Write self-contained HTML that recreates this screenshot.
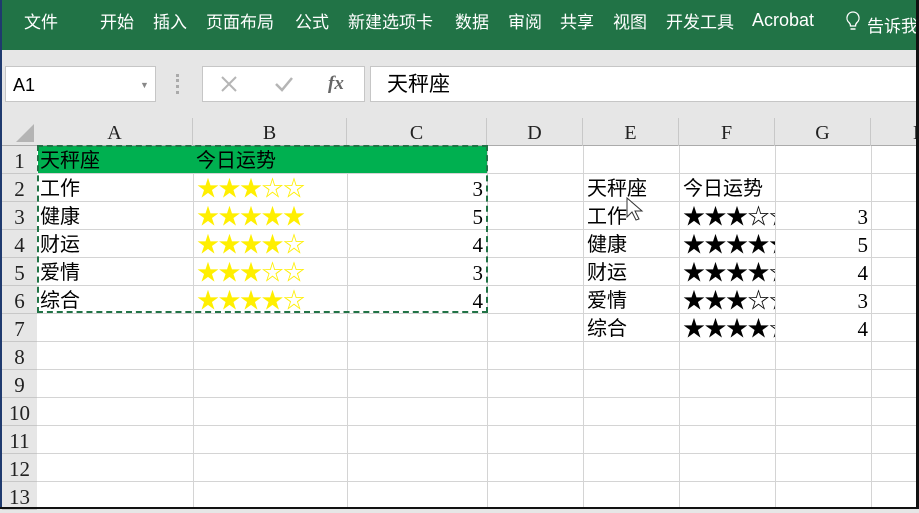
<!DOCTYPE html>
<html><head><meta charset="utf-8"><style>
*{margin:0;padding:0;box-sizing:border-box}
body{width:919px;height:509px;overflow:hidden;background:#e6e6e6;position:relative;font-family:"Liberation Sans","Noto Sans CJK SC",sans-serif}
.a{position:absolute}
.rib{left:0;top:0;width:919px;height:50px;background:#217346;color:#fff;font-size:17px}
.rib span{position:absolute;top:8px;white-space:nowrap}
.cell{position:absolute;height:28px;line-height:30px;font-size:20px;font-family:"Liberation Serif","Noto Sans CJK SC",sans-serif;color:#000;white-space:nowrap;overflow:hidden}
.n{font-size:21px}
.st{font-size:22px;letter-spacing:-0.5px}
.hl{position:absolute;left:37px;width:882px;height:1px;background:#d4d4d4}
.vl{position:absolute;top:146px;height:363px;width:1px;background:#d4d4d4}
.rh{position:absolute;left:2px;width:35px;height:28px;line-height:31px;text-align:center;font-family:"Liberation Serif",serif;font-size:21px;color:#222;background:#e6e6e6;border-bottom:1px solid #c8c8c8}
.ch{position:absolute;top:118px;height:28px;line-height:31px;text-align:center;font-family:"Liberation Serif",serif;font-size:20px;color:#222;border-right:1px solid #c8c8c8}
.y{color:#ffef00}
</style></head><body>
<div class="a rib">
<span style="left:24px">文件</span><span style="left:100px">开始</span><span style="left:153px">插入</span><span style="left:206px">页面布局</span><span style="left:295px">公式</span><span style="left:348px">新建选项卡</span><span style="left:455px">数据</span><span style="left:508px">审阅</span><span style="left:560px">共享</span><span style="left:613px">视图</span><span style="left:666px">开发工具</span><span style="left:752px;top:10px;font-size:18px">Acrobat</span>
<svg class="a" style="left:845px;top:11px" width="16" height="22" viewBox="0 0 16 22"><path d="M8 1a6 6 0 0 0-4 10.5c1 1 1.5 2 1.5 3.5h5c0-1.5.5-2.5 1.5-3.5A6 6 0 0 0 8 1z" fill="none" stroke="#fff" stroke-width="1.3"/><path d="M5.5 18h5" stroke="#fff" stroke-width="1.5"/></svg>
<span style="left:867px;top:12px">告诉我</span>
</div>
<div class="a" style="left:5px;top:66px;width:151px;height:36px;background:#fff;border:1px solid #c6c6c6;font-size:18px;line-height:36px;padding-left:7px">A1<span class="a" style="left:134px;top:0;font-size:9px;color:#888">▼</span></div>
<div class="a" style="left:176px;top:74px;width:3px;height:20px;border-left:3px dotted #aaa"></div>
<div class="a" style="left:202px;top:66px;width:163px;height:36px;background:#fff;border:1px solid #c6c6c6"></div>
<svg class="a" style="left:220px;top:75px" width="18" height="18"><path d="M2 2L16 16M16 2L2 16" stroke="#b5b5b5" stroke-width="2"/></svg>
<svg class="a" style="left:274px;top:75px" width="20" height="18"><path d="M2 9L8 15L18 3" stroke="#b5b5b5" stroke-width="2.5" fill="none"/></svg>
<div class="a" style="left:328px;top:73px;font-family:'Liberation Serif',serif;font-style:italic;font-weight:bold;font-size:19px;color:#666">fx</div>
<div class="a" style="left:370px;top:66px;width:549px;height:36px;background:#fff;border:1px solid #c6c6c6;font-size:21px;line-height:36px;padding-left:16px;font-family:'Liberation Sans','Noto Sans CJK SC',sans-serif">天秤座</div>
<div class="a" style="left:2px;top:118px;width:917px;height:391px;background:#fff"></div>
<div class="a" style="left:2px;top:118px;width:914px;height:28px;background:#e6e6e6;border-bottom:1px solid #ababab"></div>
<svg class="a" style="left:14px;top:122px" width="22" height="22"><path d="M20 2V20H2Z" fill="#b4b4b4"/></svg>
<div class="ch" style="left:37px;width:156px">A</div>
<div class="ch" style="left:193px;width:154px">B</div>
<div class="ch" style="left:347px;width:140px">C</div>
<div class="ch" style="left:487px;width:96px">D</div>
<div class="ch" style="left:583px;width:96px">E</div>
<div class="ch" style="left:679px;width:96px">F</div>
<div class="ch" style="left:775px;width:96px">G</div>
<div class="ch" style="left:871px;width:60px;text-align:left;padding-left:42px">H</div>
<div class="a" style="left:2px;top:146px;width:35px;height:363px;background:#e6e6e6;border-right:1px solid #ababab"></div>
<div class="rh" style="top:146px">1</div><div class="rh" style="top:174px">2</div><div class="rh" style="top:202px">3</div><div class="rh" style="top:230px">4</div><div class="rh" style="top:258px">5</div><div class="rh" style="top:286px">6</div><div class="rh" style="top:314px">7</div><div class="rh" style="top:342px">8</div><div class="rh" style="top:370px">9</div><div class="rh" style="top:398px">10</div><div class="rh" style="top:426px">11</div><div class="rh" style="top:454px">12</div><div class="rh" style="top:482px">13</div>
<div class="hl" style="top:173px"></div><div class="hl" style="top:201px"></div><div class="hl" style="top:229px"></div><div class="hl" style="top:257px"></div><div class="hl" style="top:285px"></div><div class="hl" style="top:313px"></div><div class="hl" style="top:341px"></div><div class="hl" style="top:369px"></div><div class="hl" style="top:397px"></div><div class="hl" style="top:425px"></div><div class="hl" style="top:453px"></div><div class="hl" style="top:481px"></div>
<div class="vl" style="left:193px"></div><div class="vl" style="left:347px"></div><div class="vl" style="left:487px"></div><div class="vl" style="left:583px"></div><div class="vl" style="left:679px"></div><div class="vl" style="left:775px"></div><div class="vl" style="left:871px"></div>
<div class="a" style="left:38px;top:146px;width:449px;height:27px;background:#00b050"></div>
<div class="a" style="left:37px;top:145px;width:451px;height:168px;border:2px dashed #217346"></div>
<div class="cell" style="left:40px;top:146px">天秤座</div><div class="cell" style="left:196px;top:146px">今日运势</div>
<div class="cell" style="left:40px;top:174px">工作</div><div class="cell y st" style="left:197px;top:174px">★★★☆☆</div><div class="cell n" style="left:347px;top:174px;width:136px;text-align:right">3</div>
<div class="cell" style="left:40px;top:202px">健康</div><div class="cell y st" style="left:197px;top:202px">★★★★★</div><div class="cell n" style="left:347px;top:202px;width:136px;text-align:right">5</div>
<div class="cell" style="left:40px;top:230px">财运</div><div class="cell y st" style="left:197px;top:230px">★★★★☆</div><div class="cell n" style="left:347px;top:230px;width:136px;text-align:right">4</div>
<div class="cell" style="left:40px;top:258px">爱情</div><div class="cell y st" style="left:197px;top:258px">★★★☆☆</div><div class="cell n" style="left:347px;top:258px;width:136px;text-align:right">3</div>
<div class="cell" style="left:40px;top:286px">综合</div><div class="cell y st" style="left:197px;top:286px">★★★★☆</div><div class="cell n" style="left:347px;top:286px;width:136px;text-align:right">4</div>
<div class="cell" style="left:587px;top:174px">天秤座</div><div class="cell" style="left:683px;top:174px">今日运势</div>
<div class="cell" style="left:587px;top:202px">工作</div><div class="cell st" style="left:683px;top:202px;width:92px">★★★☆☆</div><div class="cell n" style="left:775px;top:202px;width:93px;text-align:right">3</div>
<div class="cell" style="left:587px;top:230px">健康</div><div class="cell st" style="left:683px;top:230px;width:92px">★★★★★</div><div class="cell n" style="left:775px;top:230px;width:93px;text-align:right">5</div>
<div class="cell" style="left:587px;top:258px">财运</div><div class="cell st" style="left:683px;top:258px;width:92px">★★★★☆</div><div class="cell n" style="left:775px;top:258px;width:93px;text-align:right">4</div>
<div class="cell" style="left:587px;top:286px">爱情</div><div class="cell st" style="left:683px;top:286px;width:92px">★★★☆☆</div><div class="cell n" style="left:775px;top:286px;width:93px;text-align:right">3</div>
<div class="cell" style="left:587px;top:314px">综合</div><div class="cell st" style="left:683px;top:314px;width:92px">★★★★☆</div><div class="cell n" style="left:775px;top:314px;width:93px;text-align:right">4</div>
<svg class="a" style="left:626px;top:197px" width="20" height="26"><path d="M1 1V20L6 15L10 23L13 22L9 14H16Z" fill="#fff" stroke="#333" stroke-width="1"/></svg>
<div class="a" style="left:0;top:0;width:2px;height:509px;background:#1f3a6e"></div>
<div class="a" style="left:916px;top:0;width:3px;height:509px;background:#111"></div>
<div class="a" style="left:0;top:507px;width:919px;height:2px;background:#111"></div>
</body></html>
